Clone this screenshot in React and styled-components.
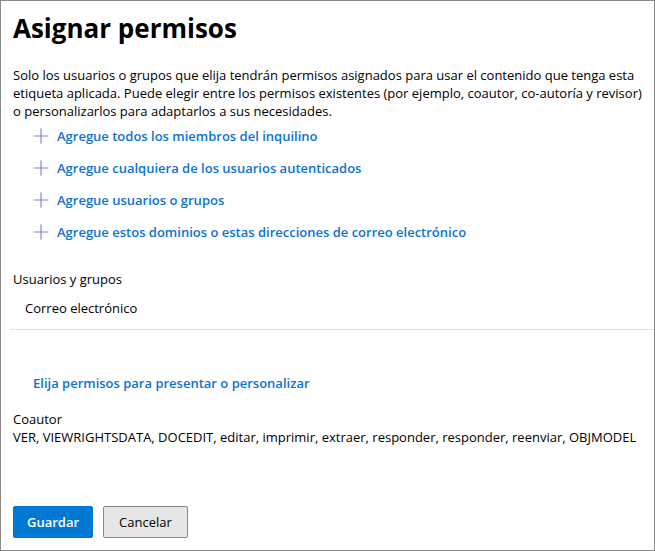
import React from 'react';
import styled, { createGlobalStyle } from 'styled-components';

const GlobalStyle = createGlobalStyle`
  html, body {
    margin: 0;
    padding: 0;
    background: #ffffff;
  }
  body {
    font-family: "Open Sans", "Noto Sans", sans-serif;
    color: #000;
  }
`;

// Panel principal
const Panel = styled.div`
  box-sizing: border-box;
  width: 655px;
  height: 551px;
  border: 1px solid #8a8a8a;
  padding: 10px 0 0 12px;
  display: flex;
  flex-direction: column;
  font-size: 13px;
`;

const Title = styled.h1`
  margin: 0;
  font-size: 26px;
  font-weight: 700;
  line-height: 34px;
`;

const Description = styled.p`
  margin: 21px 12px 0 0;
  line-height: 18px;
`;

const AddList = styled.div`
  display: flex;
  flex-direction: column;
  padding-left: 20px;
  margin-top: 7px;
  gap: 14px;
`;

const AddLink = styled.a`
  display: flex;
  align-items: center;
  gap: 8px;
  height: 18px;
  color: #0c73d0;
  font-weight: 600;
  text-decoration: none;
  cursor: pointer;
`;

const Label = styled.div`
  margin-top: ${(p) => p.$top || 0}px;
  line-height: 18px;
`;

const EmailRow = styled.div`
  padding: 11px 0 12px 15px;
  border-bottom: 1px solid #e1e1e1;
  margin-left: -3px;
  line-height: 18px;
`;

const PermsLink = styled.a`
  margin: 44px 0 0 20px;
  color: #0c73d0;
  font-weight: 600;
  line-height: 18px;
  cursor: pointer;
`;

const Rights = styled.div`
  line-height: 19px;
`;

const ButtonRow = styled.div`
  display: flex;
  gap: 10px;
  margin-top: auto;
  margin-bottom: 12px;
`;

const Button = styled.button`
  box-sizing: border-box;
  height: 32px;
  padding: 0 ${(p) => (p.$primary ? 13 : 15)}px;
  font-family: inherit;
  font-size: 13px;
  font-weight: ${(p) => (p.$primary ? 600 : 400)};
  border-radius: 2px;
  border: 1px solid ${(p) => (p.$primary ? '#0078d4' : '#8a8a8a')};
  background: ${(p) => (p.$primary ? '#0078d4' : '#e6e6e6')};
  color: ${(p) => (p.$primary ? '#fff' : '#000')};
  cursor: pointer;
`;

const PlusIcon = () => (
  <svg width="16" height="16" viewBox="0 0 16 16" fill="none">
    <path d="M8 0.5V15.5M0.5 8H15.5" stroke="#7d88d4" strokeWidth="1.2" />
  </svg>
);

const opciones = [
  'Agregue todos los miembros del inquilino',
  'Agregue cualquiera de los usuarios autenticados',
  'Agregue usuarios o grupos',
  'Agregue estos dominios o estas direcciones de correo electrónico',
];

const App = () => {
  return (
    <>
      <GlobalStyle />
      <Panel>
        <Title>Asignar permisos</Title>
        <Description>
          Solo los usuarios o grupos que elija tendrán permisos asignados para usar el contenido que tenga esta
          etiqueta aplicada. Puede elegir entre los permisos existentes (por ejemplo, coautor, co-autoría y revisor)
          o personalizarlos para adaptarlos a sus necesidades.
        </Description>
        <AddList>
          {opciones.map((texto) => (
            <AddLink key={texto}>
              <PlusIcon />
              {texto}
            </AddLink>
          ))}
        </AddList>
        <Label $top={29}>Usuarios y grupos</Label>
        <EmailRow>Correo electrónico</EmailRow>
        <PermsLink>Elija permisos para presentar o personalizar</PermsLink>
        <Label $top={18}>Coautor</Label>
        <Rights>VER, VIEWRIGHTSDATA, DOCEDIT, editar, imprimir, extraer, responder, responder, reenviar, OBJMODEL</Rights>
        <ButtonRow>
          <Button $primary>Guardar</Button>
          <Button>Cancelar</Button>
        </ButtonRow>
      </Panel>
    </>
  );
};

export default App;
